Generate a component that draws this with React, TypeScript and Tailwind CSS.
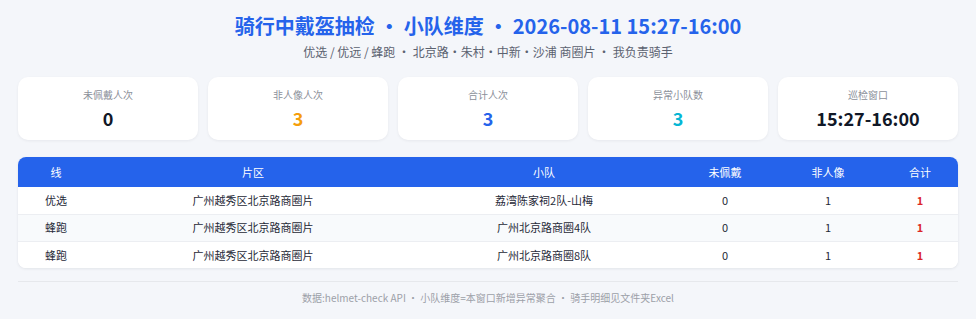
const stats = [
    { label: '未佩戴人次', value: '0', color: 'text-[#111827]' },
    { label: '非人像人次', value: '3', color: 'text-[#f59e0b]' },
    { label: '合计人次', value: '3', color: 'text-[#2563eb]' },
    { label: '异常小队数', value: '3', color: 'text-[#06b6d4]' },
    { label: '巡检窗口', value: '15:27-16:00', color: 'text-[#111827]' },
];

const rows = [
    { line: '优选', area: '广州越秀区北京路商圈片', team: '荔湾陈家祠2队-山梅', noHelmet: 0, nonHuman: 1, total: 1 },
    { line: '蜂跑', area: '广州越秀区北京路商圈片', team: '广州北京路商圈4队', noHelmet: 0, nonHuman: 1, total: 1 },
    { line: '蜂跑', area: '广州越秀区北京路商圈片', team: '广州北京路商圈8队', noHelmet: 0, nonHuman: 1, total: 1 },
];

export default function App() {
    return (
        <div
            className="w-[976px] h-[319px] bg-[#f4f6fa] px-[18px] pt-[14px] text-[#1f2937]"
            style={{ fontFamily: '"Noto Sans CJK SC", "Noto Sans", sans-serif' }}
        >
            <h1 className="text-center text-[20px] leading-[24px] font-bold text-[#2563eb]">
                骑行中戴盔抽检 · 小队维度 · 2026-08-11 15:27-16:00
            </h1>
            <p className="mt-[6px] text-center text-[12px] leading-[16px] text-[#5b6270]">
                优选 / 优远 / 蜂跑 · 北京路·朱村·中新·沙浦 商圈片 · 我负责骑手
            </p>

            <div className="mt-[17px] grid grid-cols-5 gap-[10px]">
                {stats.map((s) => (
                    <div key={s.label} className="h-[63px] rounded-[10px] bg-white shadow-[0_1px_3px_rgba(15,23,42,0.06)] flex flex-col items-center pt-[10px]">
                        <div className="text-[10px] leading-[16px] text-[#8b909a]">{s.label}</div>
                        <div className={`mt-[3px] text-[18px] leading-[24px] font-bold ${s.color}`}>{s.value}</div>
                    </div>
                ))}
            </div>

            <div className="mt-[17px] rounded-[8px] bg-white overflow-hidden shadow-[0_1px_3px_rgba(15,23,42,0.08)]">
                <table className="w-full table-fixed border-collapse text-[11px]">
                    <colgroup>
                        <col className="w-[76px]" />
                        <col className="w-[318px]" />
                        <col className="w-[264px]" />
                        <col className="w-[98px]" />
                        <col className="w-[108px]" />
                        <col />
                    </colgroup>
                    <thead>
                        <tr className="bg-[#2563eb] text-white h-[30px]">
                            <th className="font-normal">线</th>
                            <th className="font-normal">片区</th>
                            <th className="font-normal">小队</th>
                            <th className="font-normal">未佩戴</th>
                            <th className="font-normal">非人像</th>
                            <th className="font-normal">合计</th>
                        </tr>
                    </thead>
                    <tbody>
                        {rows.map((r, i) => (
                            <tr
                                key={r.team}
                                className={`h-[27px] text-center text-[#1f2937] ${i % 2 === 1 ? 'bg-[#f8fafc]' : 'bg-white'} ${i < rows.length - 1 ? 'border-b border-[#eceef2]' : ''}`}
                            >
                                <td>{r.line}</td>
                                <td>{r.area}</td>
                                <td>{r.team}</td>
                                <td>{r.noHelmet}</td>
                                <td>{r.nonHuman}</td>
                                <td className="font-bold text-[#dc2626]">{r.total}</td>
                            </tr>
                        ))}
                    </tbody>
                </table>
            </div>

            <div className="mt-[13px] border-t border-[#e6e8ec] pt-[8px] text-center text-[10px] leading-[16px] text-[#9ca0a8]">
                数据:helmet-check API · 小队维度=本窗口新增异常聚合 · 骑手明细见文件夹Excel
            </div>
        </div>
    );
}
